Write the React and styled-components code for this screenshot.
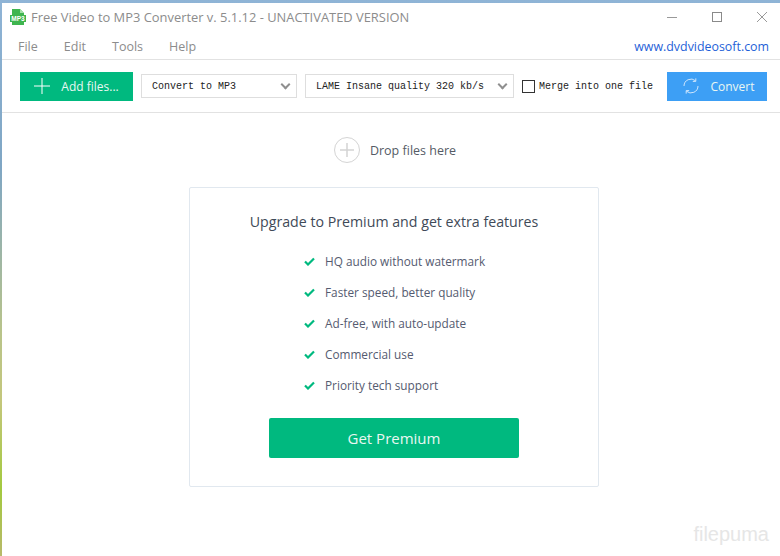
import React from "react";
import styled, { createGlobalStyle } from "styled-components";

const features = [
  "HQ audio without watermark",
  "Faster speed, better quality",
  "Ad-free, with auto-update",
  "Commercial use",
  "Priority tech support"
];

const menus = ["File", "Edit", "Tools", "Help"];

export default function App() {
  return (
    <Desktop>
      <GlobalStyle />
      <Window>
        <TitleBar>
          <Logo width="16" height="18" viewBox="0 0 16 18">
            <path d="M2 1h8l4 4v12H2z" fill="#3fb54f" />
            <path d="M10 1l4 4h-4z" fill="#a5dfa9" />
            <rect x="0" y="7" width="16" height="7" fill="#3fb54f" />
            <LogoText x="8" y="13.2" textAnchor="middle">MP3</LogoText>
          </Logo>
          <Title>Free Video to MP3 Converter v. 5.1.12 - UNACTIVATED VERSION</Title>
          <WindowControls>
            <svg width="12" height="12" viewBox="0 0 12 12">
              <path d="M1 6.5h10" stroke="#999" fill="none" />
            </svg>
            <svg width="12" height="12" viewBox="0 0 12 12">
              <rect x="1.5" y="1.5" width="9" height="9" stroke="#8a8a8a" fill="none" />
            </svg>
            <svg width="12" height="12" viewBox="0 0 12 12">
              <path d="M1 1l10 10M11 1L1 11" stroke="#999" fill="none" />
            </svg>
          </WindowControls>
        </TitleBar>

        <MenuBar>
          <MenuList>
            {menus.map(m => (
              <MenuItem key={m}>{m}</MenuItem>
            ))}
          </MenuList>
          <SiteLink>www.dvdvideosoft.com</SiteLink>
        </MenuBar>

        <Toolbar>
          <ActionButton color="#00b97f" width={113}>
            <svg width="16" height="16" viewBox="0 0 16 16">
              <path d="M8 0v16M0 8h16" stroke="#fff" fill="none" />
            </svg>
            Add files...
          </ActionButton>
          <Select width={156}>
            Convert to MP3
            <Chevron />
          </Select>
          <Select width={209}>
            LAME Insane quality 320 kb/s
            <Chevron />
          </Select>
          <MergeLabel>
            <CheckBox />
            Merge into one file
          </MergeLabel>
          <ActionButton color="#3d9ff5" width={100} push>
            <svg width="16" height="16" viewBox="0 0 16 16">
              <path
                d="M1 8a7 7 0 0 1 11.6-5.2M15 8a7 7 0 0 1-11.6 5.2M12.8 0.4v3h-3M3.2 15.6v-3h3"
                stroke="#cfe6fc"
                fill="none"
              />
            </svg>
            Convert
          </ActionButton>
        </Toolbar>

        <Content>
          <DropZone>
            <DropCircle>
              <svg width="14" height="14" viewBox="0 0 14 14">
                <path d="M7 0v14M0 7h14" stroke="#d4d4d4" strokeWidth="1.5" fill="none" />
              </svg>
            </DropCircle>
            Drop files here
          </DropZone>

          <Card>
            <CardTitle>Upgrade to Premium and get extra features</CardTitle>
            <FeatureList>
              {features.map(f => (
                <Feature key={f}>
                  <svg width="11" height="9" viewBox="0 0 11 9">
                    <path d="M1 4.5l3 3 6-6" stroke="#00b97f" strokeWidth="2.2" fill="none" />
                  </svg>
                  {f}
                </Feature>
              ))}
            </FeatureList>
            <PremiumButton>Get Premium</PremiumButton>
          </Card>

          <Watermark>filepuma</Watermark>
        </Content>
      </Window>
    </Desktop>
  );
}

const GlobalStyle = createGlobalStyle`
  html, body {
    margin: 0;
    padding: 0;
  }
  body {
    font-family: "Open Sans", "Noto Sans", sans-serif;
  }
`;

const Desktop = styled.div`
  width: 780px;
  height: 556px;
  padding: 3px 0 0 2px;
  box-sizing: border-box;
  display: flex;
  overflow: hidden;
  background: linear-gradient(180deg, #8fb4d6 0%, #7fa6c4 30%, #b9c48a 60%, #c4c77c 72%, #a3c93f 88%, #b8b96a 100%);
`;

const Window = styled.div`
  flex: 1;
  display: flex;
  flex-direction: column;
  background: #fff;
`;

const TitleBar = styled.div`
  height: 28px;
  display: flex;
  align-items: center;
  padding: 0 12px 0 8px;
  flex-shrink: 0;
`;

const Logo = styled.svg`
  flex-shrink: 0;
  margin-right: 5px;
`;

const LogoText = styled.text`
  font-family: "Liberation Sans", sans-serif;
  font-size: 6.5px;
  font-weight: 700;
  fill: #fff;
`;

const Title = styled.div`
  font-size: 12.9px;
  color: #8c8c8c;
  white-space: nowrap;
  flex: 1;
`;

const WindowControls = styled.div`
  display: flex;
  gap: 33px;
  align-items: center;
`;

const MenuBar = styled.div`
  height: 29px;
  display: flex;
  align-items: center;
  justify-content: space-between;
  padding: 3px 11px 0 16px;
  box-sizing: border-box;
  border-bottom: 1px solid #e2e2e2;
  flex-shrink: 0;
`;

const MenuList = styled.div`
  display: flex;
  gap: 26px;
`;

const MenuItem = styled.span`
  font-size: 12.5px;
  color: #8c8c8c;
`;

const SiteLink = styled.span`
  font-size: 12.4px;
  color: #1f5fd8;
`;

const Toolbar = styled.div`
  height: 53px;
  display: flex;
  align-items: center;
  padding: 0 13px 0 18px;
  box-sizing: border-box;
  border-bottom: 1px solid #e2e2e2;
  flex-shrink: 0;
`;

const ActionButton = styled.div`
  width: ${p => p.width}px;
  height: 29px;
  margin-left: ${p => (p.push ? "auto" : "0")};
  margin-right: ${p => (p.push ? "0" : "8px")};
  padding-left: ${p => (p.push ? "4px" : "0")};
  box-sizing: border-box;
  display: flex;
  align-items: center;
  justify-content: center;
  gap: 11px;
  background: ${p => p.color};
  color: #e9f7f2;
  font-size: 12px;
`;

const Select = styled.div`
  width: ${p => p.width}px;
  height: 24px;
  margin-right: 8px;
  padding: 0 26px 0 10px;
  box-sizing: border-box;
  position: relative;
  display: flex;
  align-items: center;
  border: 1px solid #dedede;
  font-family: "Liberation Mono", monospace;
  font-size: 10px;
  color: #222;
  white-space: nowrap;
`;

const Chevron = styled.i`
  position: absolute;
  right: 7px;
  top: 6px;
  width: 5px;
  height: 5px;
  border-right: 2px solid #8f8f8f;
  border-bottom: 2px solid #8f8f8f;
  transform: rotate(45deg);
`;

const MergeLabel = styled.label`
  display: flex;
  align-items: center;
  gap: 4px;
  font-family: "Liberation Mono", monospace;
  font-size: 10px;
  color: #222;
  white-space: nowrap;
`;

const CheckBox = styled.span`
  width: 11px;
  height: 11px;
  border: 1px solid #333;
  display: block;
`;

const Content = styled.div`
  flex: 1;
  position: relative;
  display: flex;
  flex-direction: column;
  align-items: center;
  padding-left: 6px;
`;

const DropZone = styled.div`
  height: 74px;
  padding-left: 2px;
  display: flex;
  align-items: center;
  gap: 10px;
  font-size: 12.5px;
  color: #555b66;
`;

const DropCircle = styled.div`
  width: 24px;
  height: 24px;
  border: 1px solid #d4d4d4;
  border-radius: 50%;
  display: flex;
  align-items: center;
  justify-content: center;
`;

const Card = styled.div`
  width: 410px;
  height: 300px;
  box-sizing: border-box;
  border: 1px solid #e1e8ef;
  border-radius: 2px;
  display: flex;
  flex-direction: column;
  align-items: center;
  padding-top: 24px;
`;

const CardTitle = styled.div`
  font-size: 14.2px;
  line-height: 20px;
  color: #3f4a58;
`;

const FeatureList = styled.div`
  align-self: flex-start;
  margin: 20px 0 0 114px;
  display: flex;
  flex-direction: column;
  gap: 13px;
`;

const Feature = styled.div`
  height: 18px;
  display: flex;
  align-items: center;
  gap: 10px;
  font-size: 11.8px;
  color: #555b70;
`;

const PremiumButton = styled.div`
  width: 250px;
  height: 40px;
  margin-top: 24px;
  border-radius: 2px;
  background: #00b97f;
  color: #e9f7f2;
  font-size: 15px;
  display: flex;
  align-items: center;
  justify-content: center;
`;

const Watermark = styled.div`
  position: absolute;
  right: 11px;
  bottom: 10px;
  font-family: "Liberation Sans", sans-serif;
  font-size: 20px;
  color: #e6e6e6;
`;
